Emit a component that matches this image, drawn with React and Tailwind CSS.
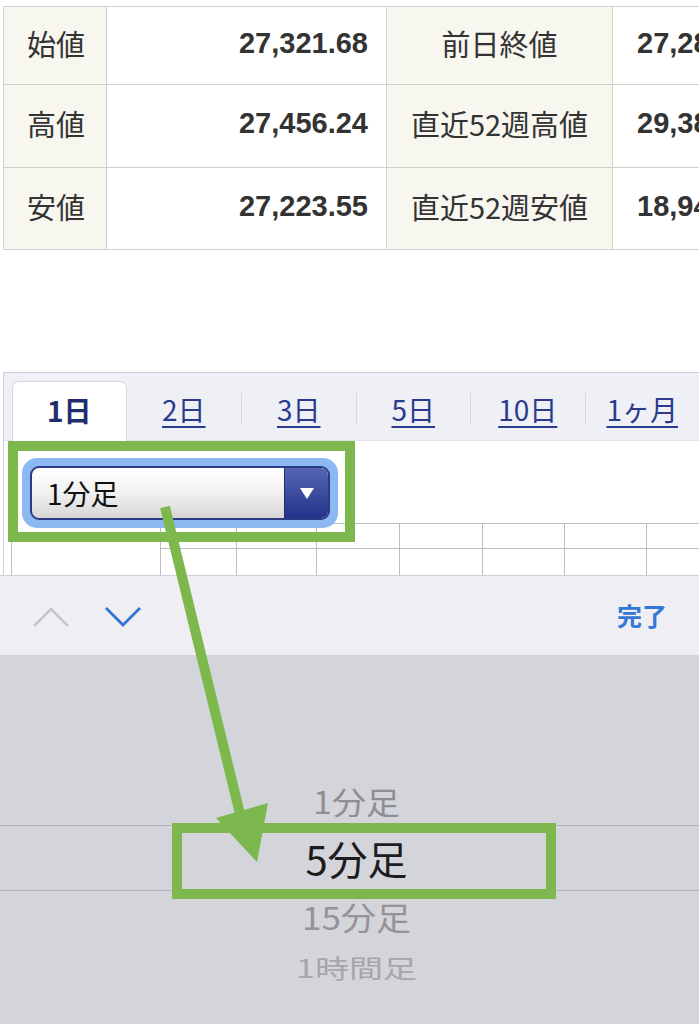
const rows = [
  ['始値', '27,321.68', '前日終値', '27,287.54', 'h-[78px]'],
  ['高値', '27,456.24', '直近52週高値', '29,388.50', 'h-[83px]'],
  ['安値', '27,223.55', '直近52週安値', '18,948.59', 'h-[82px]'],
]

const tabs = ['2日', '3日', '5日', '10日', '1ヶ月']

function PriceTable() {
  return (
    <div className="w-[782px] border-t border-l border-[#d2d2cc] grid grid-cols-[103px_280px_226px_173px]">
      {rows.map(([a, b, c, d, h]) => (
        <div key={a} className="contents">
          <div className={`${h} bg-[#f7f6ef] border-r border-b border-[#d2d2cc] flex items-center pl-[23px] pb-[4px] text-[29px] text-[#333]`}>{a}</div>
          <div className={`${h} bg-white border-r border-b border-[#d2d2cc] flex items-center justify-end pr-[18px] pb-[4px] text-[29px] font-bold text-[#333] font-['Liberation_Sans',sans-serif]`}>{b}</div>
          <div className={`${h} bg-[#f7f6ef] border-r border-b border-[#d2d2cc] flex items-center justify-center pb-[4px] text-[29px] text-[#333]`}>{c}</div>
          <div className={`${h} bg-white border-r border-b border-[#d2d2cc] flex items-center pl-[24px] pb-[4px] text-[29px] font-bold text-[#333] font-['Liberation_Sans',sans-serif]`}>{d}</div>
        </div>
      ))}
    </div>
  )
}

function ChartPanel() {
  return (
    <div className="ml-[3px] h-[203px] overflow-hidden border-t border-l border-[#cfd1d8]">
      <div className="h-[68px] bg-[#eef0f6] border-b border-[#dfe1e8] flex items-end pl-[8px]">
        <div className="w-[115px] h-[60px] bg-white rounded-t-[7px] border border-b-0 border-[#d6d8e0] flex items-center justify-center pb-[4px] text-[28px] font-bold text-[#1f2c6e] -mb-px">1日</div>
        {tabs.map((t, i) => (
          <div key={t} className="w-[115px] h-[68px] flex items-center pt-[6px]">
            {i > 0 && <div className="w-px h-[32px] bg-[#d7d9e0]" />}
            <span className="flex-1 text-center text-[28px] text-[#2b3a8c] underline underline-offset-[5px] decoration-[1.5px]">{t}</span>
          </div>
        ))}
      </div>
      <div className="bg-white">
        <div className="relative z-10 h-[82px] pl-[18px] pt-[17px]">
          <div className="w-[316px] h-[70px] rounded-[15px] bg-[#8cb9f2] p-[8px]">
            <div className="h-[54px] rounded-[9px] border-2 border-[#2d3b85] bg-gradient-to-b from-white via-[#f1f1f1] to-[#d6d6d6] flex overflow-hidden">
              <span className="flex-1 flex items-center pl-[15px] text-[28px] text-[#111]">1分足</span>
              <div className="w-[44px] bg-gradient-to-b from-[#5666b2] to-[#24338a] border-l border-[#1e2a70] flex items-center justify-center">
                <svg width="16" height="14" viewBox="0 0 16 14">
                  <polygon points="1,2 15,2 8,13" fill="#fff" />
                </svg>
              </div>
            </div>
          </div>
        </div>
        <div className="flex h-[53px] ml-[7px] overflow-hidden">
          <div className="w-[149px] shrink-0 border-l border-[#bcbcbc]" />
          <div className="shrink-0 grid grid-cols-[76px_80px_83px_83px_82px_82px_80px] grid-rows-[25px_28px] border-t border-[#bcbcbc]">
            {Array.from({ length: 14 }).map((_, i) => (
              <div key={i} className="border-l border-b border-[#bcbcbc]" />
            ))}
          </div>
        </div>
      </div>
    </div>
  )
}

function Keyboard() {
  return (
    <div className="flex flex-col flex-1">
      <div className="h-[80px] bg-[#efeff3] border-t border-[#d0d0d5] flex items-center pl-[33px] pr-[32px]">
        <svg width="36" height="20" viewBox="0 0 36 20" className="mt-[2px]">
          <polyline points="1,19 18,2 35,19" fill="none" stroke="#c6c6ca" strokeWidth="2.5" />
        </svg>
        <svg width="36" height="20" viewBox="0 0 36 20" className="ml-[36px] mt-[2px]">
          <polyline points="1,1 18,18 35,1" fill="none" stroke="#2f74d4" strokeWidth="2.8" />
        </svg>
        <span className="ml-auto text-[25px] font-bold text-[#3478d6]">完了</span>
      </div>
      <div className="flex-1 bg-[#d4d5da] flex flex-col items-center pt-[125px]">
        <div className="h-[40px] pl-[14px] flex items-center text-[34px] text-[#8e8e93] scale-y-90">1分足</div>
        <div className="mt-[5px] w-full h-[66px] pl-[14px] border-y border-[#b2b2b7] flex items-center justify-center text-[40px] text-[#1c1c1e]">5分足</div>
        <div className="mt-[5px] h-[40px] pl-[14px] flex items-center text-[35px] text-[#939398] scale-y-90">15分足</div>
        <div className="mt-[11px] h-[40px] pl-[14px] flex items-center text-[34px] text-[#a6a6ab] scale-y-75">1時間足</div>
      </div>
    </div>
  )
}

export default function App() {
  return (
    <div className="relative w-[699px] h-[1024px] overflow-hidden bg-white flex flex-col font-['Noto_Sans_CJK_JP','Liberation_Sans',sans-serif]">
      <div className="pt-[6px] pl-[3px]">
        <PriceTable />
      </div>
      <div className="mt-[122px]">
        <ChartPanel />
      </div>
      <Keyboard />

      {/* annotations */}
      <div className="absolute left-[8px] top-[441px] w-[347px] h-[101px] border-[10px] border-[#7cb84e] z-20" />
      <div className="absolute left-[172px] top-[823px] w-[384px] h-[76px] border-[10px] border-[#7cb84e] z-20" />
      <svg className="absolute inset-0 z-30 pointer-events-none" width="699" height="1024" viewBox="0 0 699 1024">
        <line x1="165" y1="507" x2="241" y2="818" stroke="#7cb84e" strokeWidth="10" />
        <polygon points="216,818 268,803 257,862" fill="#7cb84e" />
      </svg>
    </div>
  )
}
